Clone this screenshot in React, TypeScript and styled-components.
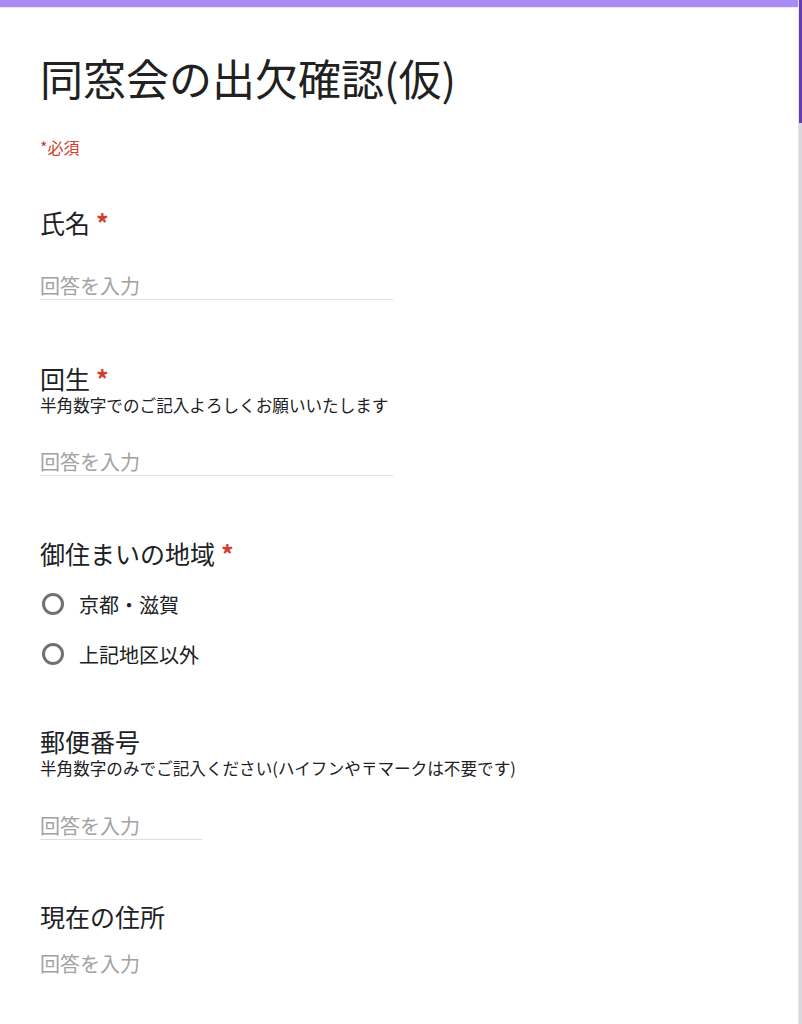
import React from "react";
import styled, { createGlobalStyle } from "styled-components";

const Global = createGlobalStyle`
  html, body { margin: 0; padding: 0; background: #ffffff; overflow: hidden; }
  body { font-family: "Noto Sans CJK JP", "Noto Sans", sans-serif; color: #202124; }
  * { box-sizing: border-box; }
`;

const Page = styled.div`
  display: flex;
  width: 802px;
  height: 1024px;
`;

const Main = styled.main`
  flex: 1;
  display: flex;
  flex-direction: column;
`;

const TopBar = styled.div`
  height: 8px;
  background: #a98bf6;
  border-bottom: 1px solid #ece6fb;
`;

const Content = styled.div`
  padding: 43px 0 0 40px;
  display: flex;
  flex-direction: column;
`;

const Title = styled.h1`
  margin: 0;
  font-size: 43px;
  line-height: 52px;
  font-weight: 400;
  color: #212121;
`;

const Required = styled.div`
  margin-top: 34px;
  font-size: 16px;
  line-height: 20px;
  color: #d23f31;
`;

const Question = styled.section<{ $top: number }>`
  margin-top: ${(p) => p.$top}px;
  display: flex;
  flex-direction: column;
`;

const QTitle = styled.div`
  font-size: 25px;
  line-height: 32px;
  color: #202124;
`;

const Star = styled.span`
  color: #d23f31;
  margin-left: 6px;
  font-weight: 700;
`;

const Desc = styled.div`
  font-size: 16.6px;
  line-height: 22px;
  color: #202124;
`;

const Field = styled.input<{ $width: number; $top: number; $line: boolean }>`
  margin: ${(p) => p.$top}px 0 0 0;
  width: ${(p) => p.$width}px;
  height: 29px;
  padding: 0;
  border: none;
  border-bottom: 1px solid ${(p) => (p.$line ? "#dedede" : "transparent")};
  outline: none;
  font-family: "Noto Sans CJK JP", "Noto Sans", sans-serif;
  font-size: 20px;
  line-height: 28px;
  color: #202124;
  background: transparent;
  &::placeholder { color: #a2a2a2; }
`;

const Options = styled.div`
  margin-top: 10px;
  display: flex;
  flex-direction: column;
`;

const Option = styled.label`
  height: 50px;
  display: flex;
  align-items: center;
  gap: 15px;
  font-size: 20px;
  color: #202124;
`;

const Radio = styled.span`
  width: 22px;
  height: 22px;
  margin-left: 2px;
  border-radius: 50%;
  border: 3px solid #717171;
  flex: none;
`;

const Rail = styled.div`
  width: 4px;
  border-left: 1px solid #e6e6ea;
  background: #d9d8df;
  display: flex;
  flex-direction: column;
`;

const Thumb = styled.div`
  height: 123px;
  background: #673ab7;
`;

export default function App() {
  return (
    <>
      <Global />
      <Page>
        <Main>
          <TopBar />
          <Content>
            <Title>同窓会の出欠確認(仮)</Title>
            <Required>*必須</Required>

            <Question $top={49}>
              <QTitle>
                氏名<Star>*</Star>
              </QTitle>
              <Field $top={33} $width={353} $line placeholder="回答を入力" />
            </Question>

            <Question $top={62}>
              <QTitle>
                回生<Star>*</Star>
              </QTitle>
              <Desc>半角数字でのご記入よろしくお願いいたします</Desc>
              <Field $top={31} $width={353} $line placeholder="回答を入力" />
            </Question>

            <Question $top={61}>
              <QTitle>
                御住まいの地域<Star>*</Star>
              </QTitle>
              <Options>
                <Option>
                  <Radio />
                  京都・滋賀
                </Option>
                <Option>
                  <Radio />
                  上記地区以外
                </Option>
              </Options>
            </Question>

            <Question $top={46}>
              <QTitle>郵便番号</QTitle>
              <Desc>半角数字のみでご記入ください(ハイフンや〒マークは不要です)</Desc>
              <Field $top={32} $width={162} $line placeholder="回答を入力" />
            </Question>

            <Question $top={60}>
              <QTitle>現在の住所</QTitle>
              <Field $top={17} $width={353} $line={false} placeholder="回答を入力" />
            </Question>
          </Content>
        </Main>
        <Rail>
          <Thumb />
        </Rail>
      </Page>
    </>
  );
}
